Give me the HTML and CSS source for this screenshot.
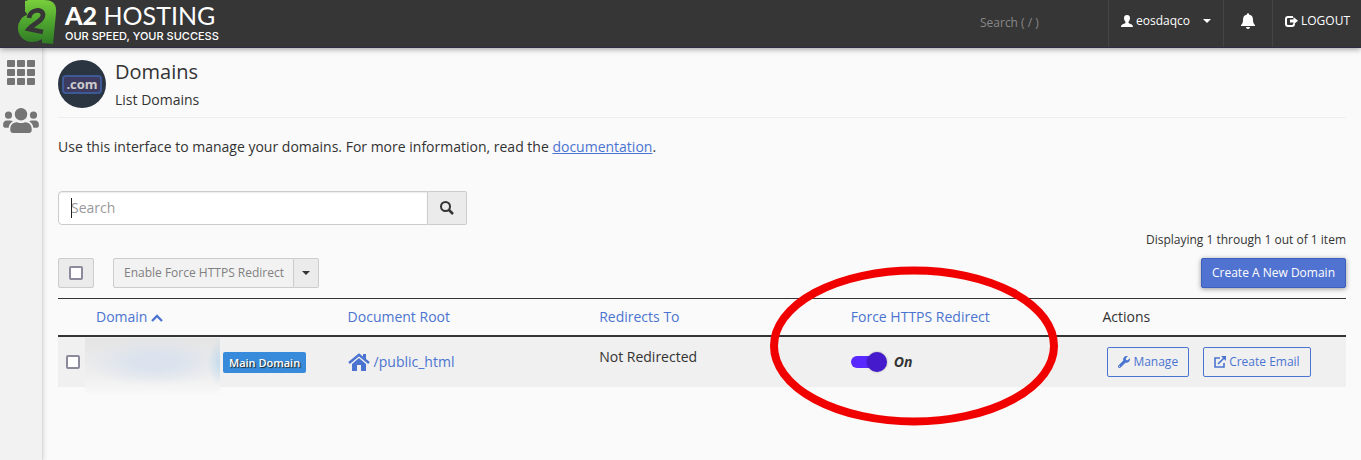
FILE: index.html
```html
<!DOCTYPE html>
<html lang="en">
<head>
<meta charset="utf-8">
<title>Domains</title>
<meta name="viewport" content="width=device-width, initial-scale=1">
<link rel="stylesheet" href="styles.css">
</head>
<body>
<header class="topbar">
  <a class="brand" href="#" aria-label="A2 Hosting home">
    <svg class="brand-mark" viewBox="0 0 40 44" aria-hidden="true">
      <defs><linearGradient id="leaf" x1="0" y1="0" x2="0" y2="1"><stop offset="0" stop-color="#7ad03c"/><stop offset=".5" stop-color="#4fa62f"/><stop offset="1" stop-color="#2f7a25"/></linearGradient></defs>
      <path fill="url(#leaf)" d="M8 1C14-1 20-1 27 0C36 0 40 4 39 13L36 44L25 43V39C19 43 10 43 5 38C0 33 0 25 3 21C5 17 7 16 10 15L9 12L8 12Z"/>
      <path fill="none" stroke="#363636" stroke-width="4.800" d="M12 18C13 9 26 8 26 15C26 21 17 23 12 29L26 32"/>
    </svg>
    <span class="brand-text">
      <span class="brand-name"><b>A2</b> HOSTING</span>
      <span class="brand-tag">OUR SPEED, YOUR SUCCESS</span>
    </span>
  </a>
  <input class="top-search" type="text" placeholder="Search ( / )" aria-label="Search tools">
  <button class="top-item user" type="button">
    <svg class="i12" viewBox="0 0 12 12" aria-hidden="true"><path fill="currentColor" d="M6 0C8 0 9 1 9 3C9 5 8 6 7.500 7V8C9 9 12 9 12 12H0C0 9 3 9 4.500 8V7C4 6 3 5 3 3C3 1 4 0 6 0Z"/></svg>
    <span>eosdaqco</span><i class="caret"></i>
  </button>
  <button class="top-item bell" type="button" aria-label="Notifications">
    <svg viewBox="0 0 14 16" aria-hidden="true"><path fill="currentColor" d="M6 1C6 0 8 0 8 1V1.500C11 2 12 4 12 7C12 10 13 11 14 12V13H0V12C1 11 2 10 2 7C2 4 3 2 6 1.500ZM5 14H9C9 16.500 5 16.500 5 14Z"/></svg>
  </button>
  <a class="top-item logout" href="#">
    <svg class="i13" viewBox="0 0 13 12" aria-hidden="true"><path fill="none" stroke="currentColor" stroke-width="2" d="M8 2H3Q1 2 1 4V9Q1 11 3 11H7Q9 11 9 9V8.500"/><path fill="currentColor" d="M5 4.500H8.500V2L13 5.800L8.500 9.500V7.500H5Z"/></svg>
    <span>LOGOUT</span>
  </a>
</header>
<div class="shell">
  <nav class="side" aria-label="Main">
    <a href="#" aria-label="Tools"><svg viewBox="0 0 28 25" aria-hidden="true"><g fill="currentColor"><rect width="8" height="7" rx="1"/><rect x="10" width="8" height="7" rx="1"/><rect x="20" width="8" height="7" rx="1"/><rect y="9" width="8" height="7" rx="1"/><rect x="10" y="9" width="8" height="7" rx="1"/><rect x="20" y="9" width="8" height="7" rx="1"/><rect y="18" width="8" height="7" rx="1"/><rect x="10" y="18" width="8" height="7" rx="1"/><rect x="20" y="18" width="8" height="7" rx="1"/></g></svg></a>
    <a href="#" aria-label="User manager"><svg class="people" viewBox="0 0 640 448" aria-hidden="true"><path fill="currentColor" d="M96 192a64 64 0 1 0 0-128 64 64 0 0 0 0 128zm448 0a64 64 0 1 0 0-128 64 64 0 0 0 0 128zm32 32h-64c-18 0-34 7-45 18 40 22 69 62 75 110h66c18 0 32-14 32-32v-32c0-35-29-64-64-64zM320 224a112 112 0 1 0 0-224 112 112 0 0 0 0 224zm77 32h-8c-42 20-96 20-138 0h-8c-64 0-115 52-115 115v29c0 27 21 48 48 48h288c27 0 48-21 48-48v-29c0-63-51-115-115-115zM173 242c-11-11-27-18-45-18H64c-35 0-64 29-64 64v32c0 18 14 32 32 32h66c6-48 35-88 75-110z"/></svg></a>
  </nav>
  <main class="main">
    <div class="page-head">
      <span class="dotcom"><span>.com</span></span>
      <div><h1>Domains</h1><h2>List Domains</h2></div>
    </div>
    <p class="intro">Use this interface to manage your domains. For more information, read the <a href="#">documentation</a>.</p>
    <form class="search">
      <input type="text" placeholder="Search" aria-label="Search domains"><i class="cursor"></i>
      <button type="button" aria-label="Search"><svg viewBox="0 0 14 14" aria-hidden="true"><circle cx="5.500" cy="5.500" r="4.500" fill="none" stroke="currentColor" stroke-width="2"/><path stroke="currentColor" stroke-width="2.500" d="M9 9L13 13"/></svg></button>
    </form>
    <p class="count">Displaying 1 through 1 out of 1 item</p>
    <div class="tools">
      <label class="check-all"><input type="checkbox" aria-label="Select all domains"></label>
      <div class="split"><button class="enable" type="button" disabled>Enable Force HTTPS Redirect</button><button class="more" type="button" aria-label="More options"><i class="caret"></i></button></div>
      <button class="create" type="button">Create A New Domain</button>
    </div>
    <table class="domains">
      <thead><tr><th class="pick"></th><th><a href="#">Domain <svg class="sort" viewBox="0 0 12 8" aria-hidden="true"><path fill="none" stroke="currentColor" stroke-width="2.300" d="M1 7L6 2L11 7"/></svg></a></th><th><a href="#">Document Root</a></th><th><a href="#">Redirects To</a></th><th><a href="#">Force HTTPS Redirect</a></th><th>Actions</th></tr></thead>
      <tbody><tr>
        <td class="pick"><input type="checkbox" aria-label="Select domain"></td>
        <td class="name"><span class="redacted"></span><span class="badge">Main Domain</span></td>
        <td><a class="root" href="#"><svg viewBox="0 0 22 18" aria-hidden="true"><path fill="none" stroke="currentColor" stroke-width="2.400" d="M1 10L11 1.800L21 10"/><path fill="currentColor" d="M15 1H18V7L15 4ZM11 5L18 11V18H13V12H9V18H4V11Z"/></svg>/public_html</a></td>
        <td class="redirect">Not Redirected</td>
        <td class="force"><label class="switch"><input type="checkbox" role="switch" checked><span>On</span></label>
          <svg class="ring" viewBox="0 0 288 160" aria-hidden="true"><ellipse cx="144" cy="80" rx="140" ry="75.500" fill="none" stroke="#f10000" stroke-width="8"/></svg></td>
        <td><div class="actions">
          <button type="button"><svg viewBox="0 0 512 512" aria-hidden="true"><path fill="currentColor" d="M508 109c-2-9-14-12-21-5l-74 74-68-11-11-68 74-74c7-7 4-18-6-21-48-12-102 1-140 39-41 41-52 100-36 151L19 402a64 64 0 0 0 91 91l208-208c51 16 109 5 150-36 38-38 51-91 40-140zM64 472a24 24 0 1 1 0-48 24 24 0 0 1 0 48z"/></svg>Manage</button>
          <button type="button"><svg viewBox="0 0 12 12" aria-hidden="true"><path fill="none" stroke="currentColor" stroke-width="1.600" d="M6 2H1V11H10V7M4 8L10 2"/><path fill="currentColor" d="M7 0H12V5Z"/></svg>Create Email</button>
        </div></td>
      </tr></tbody>
    </table>
  </main>
</div>
</body>
</html>
```
FILE: styles.css
```css
* { box-sizing: border-box; }
body { margin: 0; min-height: 100vh; display: flex; flex-direction: column; background: #fafafa; color: #333; font: 14px/20px "Open Sans", "Noto Sans", sans-serif; }
button, input { font: inherit; color: inherit; margin: 0; }
a { color: #4b74d0; text-decoration: none; }
svg { display: block; flex: none; }
h1, h2, p { margin: 0; font-weight: 400; }

.topbar { position: relative; z-index: 1; display: flex; height: 48px; background: #363636; color: #fff; border-bottom: 1px solid #2d2d44; box-shadow: 0 1px 6px rgba(0,0,0,.4); font-size: 12px; }
.brand { display: flex; gap: 8px; padding-left: 17px; margin-right: auto; color: #fff; }
.brand-mark { width: 40px; height: 44px; }
.brand-text { display: flex; flex-direction: column; }
.brand-name { font: 25px/30px Lato, sans-serif; }
.brand-name b { font-weight: 900; }
.brand-tag { font: 500 11px/12px Inter, sans-serif; }
.top-search { width: 128px; border: 0; padding: 0 0 2px; margin: 0; background: none; outline: 0; }
.top-search::placeholder { color: #888; opacity: 1; }
.top-item { display: flex; align-items: center; gap: 3px; padding: 0 12px 6px; border: 0; border-left: 1px solid #444; background: none; color: #fff; }
.user .caret { margin-left: 10px; }
.bell { padding: 0 17px 6px; }
.logout { padding-right: 11px; }
.bell svg { width: 14px; height: 16px; }
.i12 { width: 12px; height: 12px; }
.i13 { width: 13px; height: 12px; }
.caret { border: 4px solid transparent; border-top-color: currentColor; border-bottom: 0; }

.shell { flex: 1; display: flex; }
.side { width: 43px; flex: none; display: flex; flex-direction: column; align-items: center; gap: 23px; padding: 12px 0 0; background: #f2f2f2; border-right: 1px solid #ddd; box-shadow: 1px 0 4px rgba(0,0,0,.12); }
.side a { color: #757575; }
.side svg { width: 28px; height: 25px; }
.side .people { width: 36px; }
.main { flex: 1; min-width: 0; padding: 12px 15px; }

.page-head { display: flex; gap: 9px; padding-bottom: 7px; border-bottom: 1px solid #eee; }
.dotcom { width: 48px; height: 48px; border-radius: 50%; background: #2b3441; display: grid; place-items: center; }
.dotcom span { width: 40px; height: 19px; border: 2px solid #3d5a96; border-radius: 4px; background: #3d3c60; color: #ccc; font-size: 13px; line-height: 14px; font-weight: 700; text-align: center; }
h1 { font-size: 20px; line-height: 24px; }
h2 { font-size: 14px; line-height: 20px; margin-top: 6px; }
.intro { margin-top: 19px; }
.intro a { text-decoration: underline; }
.search { position: relative; display: flex; width: 409px; max-width: 100%; height: 34px; margin-top: 34px; }
.search input { flex: 1; min-width: 0; border: 1px solid #ccc; border-radius: 4px 0 0 4px; background: #fff; padding: 0 12px; outline: 0; box-shadow: inset 0 1px 1px rgba(0,0,0,.08); }
.search input::placeholder { color: #999; opacity: 1; }
.search button { width: 39px; display: grid; place-items: center; padding: 0; border: 1px solid #ccc; border-left: 0; border-radius: 0 2px 2px 0; background: #ebebeb; }
.search button svg { width: 14px; height: 14px; }
.cursor { position: absolute; left: 13px; top: 7px; width: 1px; height: 20px; background: #222; }
.count { margin-top: 5px; text-align: right; font-size: 12px; }
.tools { display: flex; align-items: center; margin-top: 8px; font-size: 12px; }
.check-all, .split, .create { height: 30px; }
.check-all { width: 36px; display: grid; place-items: center; border: 1px solid #ccc; border-radius: 2px; background: #ebebeb; }
input[type="checkbox"] { appearance: none; width: 14px; height: 14px; border: 2px solid #8f899c; border-radius: 2px; background: #fff; }
.split { display: flex; margin: 0 auto 0 19px; }
.split button { border: 1px solid #ccc; background: #ebebeb; padding: 0 9px 0 10px; }
.split .enable { background: #f2f2f2; color: #808080; border-radius: 2px 0 0 2px; }
.split .more { width: 25px; display: grid; place-items: center; padding: 0; border-left: 0; border-radius: 0 2px 2px 0; }
.create { padding: 0 10px; border: 1px solid #3d5fbd; border-radius: 2px; background: #5072d0; color: #fff; box-shadow: 0 1px 5px rgba(0,0,0,.4); }

.domains { width: 100%; margin-top: 10px; border-collapse: separate; border-spacing: 0; table-layout: fixed; }
th, td { padding: 0 8px; text-align: left; font-weight: 400; }
th { height: 39px; border-top: 1px solid #333; border-bottom: 2px solid #333; }
td { height: 50px; background: #f0f0f0; }
.domains .pick { width: 30px; }
td.pick input { display: block; }
.sort { display: inline-block; width: 12px; height: 8px; }
.name { position: relative; }
.redacted { position: absolute; left: -3px; top: 1px; width: 135px; height: 58px; background: radial-gradient(ellipse 12px 24px at 100% 42%, rgba(180,212,235,.7), transparent), radial-gradient(ellipse 70px 24px at 52% 42%, rgba(218,226,238,.9) 30%, transparent), linear-gradient(#e4e4e4, #f0f0f0 70%, #fafafa); }
.badge { display: block; width: max-content; margin-left: 127px; padding: 0 6px; border-radius: 2px; background: #388bdb; color: #fff; font-size: 11px; font-weight: 600; line-height: 21px; text-shadow: 1px 1px 1px #222; }
.root { display: flex; align-items: center; gap: 4px; }
.root svg { width: 22px; height: 18px; }
.redirect { padding-bottom: 10px; }
.force { position: relative; }
.switch { display: flex; align-items: center; gap: 7px; font-weight: 700; font-style: italic; }
.switch input[type="checkbox"] { display: grid; align-items: center; width: 36px; height: 20px; border: 0; background: none; }
.switch input::before, .switch input::after { content: ""; grid-area: 1 / 1; }
.switch input::before { width: 30px; height: 12px; border-radius: 6px; background: #5928ff; }
.switch input::after { justify-self: end; width: 20px; height: 20px; border-radius: 50%; background: #451acd; box-shadow: 0 0 2px rgba(0,0,0,.4); }
.ring { position: absolute; z-index: 2; left: -73px; top: -71px; width: 288px; height: 160px; pointer-events: none; }
.actions { display: flex; gap: 14px; padding-left: 5px; font-size: 12px; }
.actions button { display: flex; align-items: center; gap: 3px; height: 30px; padding: 0 10px; border: 1px solid #4b74d0; border-radius: 2px; background: transparent; color: #4b74d0; white-space: nowrap; }
.actions svg { width: 12px; height: 12px; }
```
